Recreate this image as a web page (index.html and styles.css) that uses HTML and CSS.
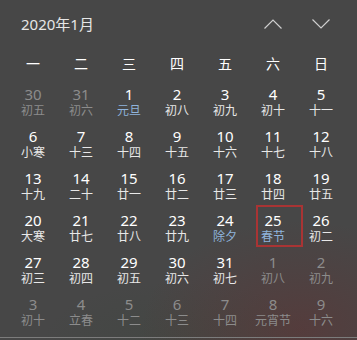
FILE: index.html
```html
<!DOCTYPE html>
<html lang="zh-CN">
<head>
    <meta charset="UTF-8">
    <meta name="viewport" content="width=device-width, initial-scale=1.0">
    <title>日历</title>
    <link rel="stylesheet" href="styles.css">
</head>
<body>
    <div class="calendar">
        <div class="top">
            <div class="title">2020年1月</div>
            <div class="nav">
                <span class="arrow">
                    <svg width="18" height="10" viewBox="0 0 18 10"><path d="M0.5 9.5 L9 1 L17.5 9.5" fill="none" stroke="#cfcfcf" stroke-width="1.2"/></svg>
                </span>
                <span class="arrow">
                    <svg width="18" height="10" viewBox="0 0 18 10"><path d="M0.5 0.5 L9 9 L17.5 0.5" fill="none" stroke="#cfcfcf" stroke-width="1.2"/></svg>
                </span>
            </div>
        </div>
        <div class="weekdays">
            <div>一</div><div>二</div><div>三</div><div>四</div><div>五</div><div>六</div><div>日</div>
        </div>
        <div class="days">
            <div class="day other"><span class="num">30</span><span class="lunar">初五</span></div>
            <div class="day other"><span class="num">31</span><span class="lunar">初六</span></div>
            <div class="day"><span class="num">1</span><span class="lunar fest">元旦</span></div>
            <div class="day"><span class="num">2</span><span class="lunar">初八</span></div>
            <div class="day"><span class="num">3</span><span class="lunar">初九</span></div>
            <div class="day"><span class="num">4</span><span class="lunar">初十</span></div>
            <div class="day"><span class="num">5</span><span class="lunar">十一</span></div>

            <div class="day"><span class="num">6</span><span class="lunar">小寒</span></div>
            <div class="day"><span class="num">7</span><span class="lunar">十三</span></div>
            <div class="day"><span class="num">8</span><span class="lunar">十四</span></div>
            <div class="day"><span class="num">9</span><span class="lunar">十五</span></div>
            <div class="day"><span class="num">10</span><span class="lunar">十六</span></div>
            <div class="day"><span class="num">11</span><span class="lunar">十七</span></div>
            <div class="day"><span class="num">12</span><span class="lunar">十八</span></div>

            <div class="day"><span class="num">13</span><span class="lunar">十九</span></div>
            <div class="day"><span class="num">14</span><span class="lunar">二十</span></div>
            <div class="day"><span class="num">15</span><span class="lunar">廿一</span></div>
            <div class="day"><span class="num">16</span><span class="lunar">廿二</span></div>
            <div class="day"><span class="num">17</span><span class="lunar">廿三</span></div>
            <div class="day"><span class="num">18</span><span class="lunar">廿四</span></div>
            <div class="day"><span class="num">19</span><span class="lunar">廿五</span></div>

            <div class="day"><span class="num">20</span><span class="lunar">大寒</span></div>
            <div class="day"><span class="num">21</span><span class="lunar">廿七</span></div>
            <div class="day"><span class="num">22</span><span class="lunar">廿八</span></div>
            <div class="day"><span class="num">23</span><span class="lunar">廿九</span></div>
            <div class="day"><span class="num">24</span><span class="lunar fest">除夕</span></div>
            <div class="day today"><span class="num">25</span><span class="lunar fest">春节</span></div>
            <div class="day"><span class="num">26</span><span class="lunar">初二</span></div>

            <div class="day"><span class="num">27</span><span class="lunar">初三</span></div>
            <div class="day"><span class="num">28</span><span class="lunar">初四</span></div>
            <div class="day"><span class="num">29</span><span class="lunar">初五</span></div>
            <div class="day"><span class="num">30</span><span class="lunar">初六</span></div>
            <div class="day"><span class="num">31</span><span class="lunar">初七</span></div>
            <div class="day other"><span class="num">1</span><span class="lunar">初八</span></div>
            <div class="day other"><span class="num">2</span><span class="lunar">初九</span></div>

            <div class="day other"><span class="num">3</span><span class="lunar">初十</span></div>
            <div class="day other"><span class="num">4</span><span class="lunar">立春</span></div>
            <div class="day other"><span class="num">5</span><span class="lunar">十二</span></div>
            <div class="day other"><span class="num">6</span><span class="lunar">十三</span></div>
            <div class="day other"><span class="num">7</span><span class="lunar">十四</span></div>
            <div class="day other"><span class="num">8</span><span class="lunar">元宵节</span></div>
            <div class="day other"><span class="num">9</span><span class="lunar">十六</span></div>
        </div>
        <div class="divider"></div>
    </div>
</body>
</html>
```

FILE: styles.css
```css
html, body {
    margin: 0;
    height: 100%;
}
body {
    background-color: #474747;
    background-image:
        radial-gradient(ellipse 160px 110px at 300px 330px, rgba(110, 40, 40, 0.35), rgba(110, 40, 40, 0)),
        radial-gradient(ellipse 140px 60px at 180px 340px, rgba(50, 70, 50, 0.18), rgba(50, 70, 50, 0));
    font-family: "Noto Sans", "Noto Sans CJK SC", sans-serif;
    color: #fff;
    overflow: hidden;
}
.calendar {
    width: 357px;
    height: 340px;
    display: flex;
    flex-direction: column;
}
.top {
    height: 46px;
    display: flex;
    align-items: center;
    justify-content: space-between;
    padding: 0 27px 0 21px;
}
.title {
    font-size: 15px;
    color: #e6e6e6;
    margin-top: 1px;
}
.nav {
    display: flex;
    gap: 30px;
    margin-top: 1px;
}
.arrow {
    display: flex;
    width: 18px;
    height: 10px;
}
.weekdays {
    display: grid;
    grid-template-columns: repeat(7, 48px);
    height: 33px;
    padding-left: 9px;
    align-items: center;
    font-family: "Noto Sans CJK SC", sans-serif;
    font-size: 14px;
    color: #fff;
}
.weekdays div {
    text-align: center;
}
.days {
    display: grid;
    grid-template-columns: repeat(7, 48px);
    grid-auto-rows: 42px;
    padding-left: 9px;
}
.day {
    display: flex;
    flex-direction: column;
    align-items: center;
    justify-content: center;
    box-sizing: border-box;
    padding-top: 2px;
}
.num {
    font-size: 15px;
    line-height: 20px;
}
.lunar {
    font-family: "Noto Sans CJK SC", sans-serif;
    font-size: 12px;
    line-height: 17px;
    margin-top: -3px;
    color: #e8e8e8;
}
.fest {
    color: #8fb4dc;
}
.other .num,
.other .lunar {
    color: #8c8c8c;
}
.today {
    border: 2px solid #a93434;
    margin-left: 7px;
    margin-right: -6px;
    padding-right: 13px;
}
.divider {
    margin-top: 6px;
    height: 1px;
    background-color: #7c7c7c;
}
```
